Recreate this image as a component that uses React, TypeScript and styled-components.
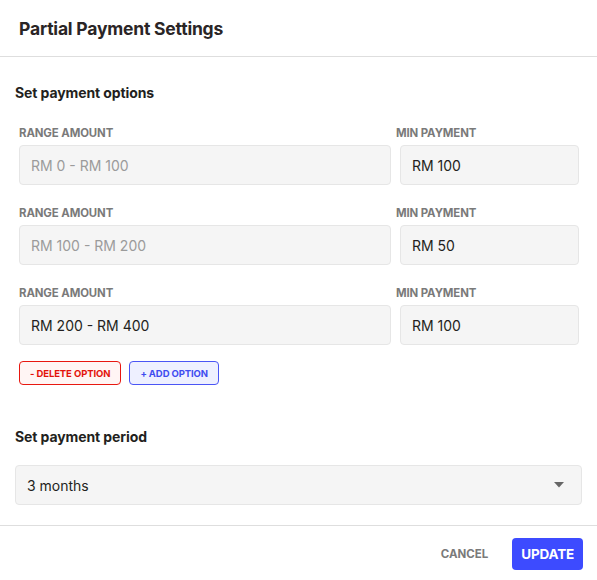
import * as React from "react";
import styled, { createGlobalStyle } from "styled-components";

const GlobalStyle = createGlobalStyle`
  html, body {
    margin: 0;
    padding: 0;
    background: #ffffff;
  }
  body {
    font-family: Inter, "Noto Sans", sans-serif;
    color: #231f20;
  }
`;

const options = [
  { range: "RM 0 - RM 100", min: "RM 100", locked: true },
  { range: "RM 100 - RM 200", min: "RM 50", locked: true },
  { range: "RM 200 - RM 400", min: "RM 100", locked: false }
];

export default function App() {
  return (
    <React.Fragment>
      <GlobalStyle />
      <Dialog>
        <Header>
          <Title>Partial Payment Settings</Title>
        </Header>

        <Body>
          <SectionTitle>Set payment options</SectionTitle>

          {options.map((option, i) => (
            <OptionRow key={i}>
              <RangeCell>
                <Label>Range Amount</Label>
                <Field $muted={option.locked}>{option.range}</Field>
              </RangeCell>
              <MinCell>
                <Label>Min Payment</Label>
                <MinField>{option.min}</MinField>
              </MinCell>
            </OptionRow>
          ))}

          <OptionActions>
            <SmallButton $tone="red">- Delete Option</SmallButton>
            <SmallButton $tone="blue">+ Add Option</SmallButton>
          </OptionActions>

          <PeriodTitle>Set payment period</PeriodTitle>
          <Select>
            <span>3 months</span>
            <svg width="10" height="6" viewBox="0 0 10 6">
              <path d="M0 0 L10 0 L5 5.5 Z" fill="#666" />
            </svg>
          </Select>
        </Body>

        <Footer>
          <CancelButton>Cancel</CancelButton>
          <UpdateButton>Update</UpdateButton>
        </Footer>
      </Dialog>
    </React.Fragment>
  );
}

const Dialog = styled.div`
  width: 597px;
  height: 580px;
  display: flex;
  flex-direction: column;
  background: #fff;
  box-sizing: border-box;
`;

const Header = styled.div`
  height: 56px;
  display: flex;
  align-items: center;
  padding-left: 19px;
  border-bottom: 1px solid #dedede;
`;

const Title = styled.h1`
  margin: 0;
  font-size: 17.5px;
  font-weight: 700;
  letter-spacing: -0.2px;
  color: #2a2526;
`;

const Body = styled.div`
  padding: 26px 15px 20px;
  border-bottom: 1px solid #dedede;
`;

const SectionTitle = styled.h2`
  margin: 0 0 24px;
  font-size: 14px;
  line-height: 20px;
  font-weight: 700;
  letter-spacing: -0.1px;
  color: #231f20;
`;

const PeriodTitle = styled(SectionTitle)`
  margin: 42px 0 18px;
`;

const OptionRow = styled.div`
  display: grid;
  grid-template-columns: 376px 1fr;
  column-gap: 5px;
  margin-bottom: 22px;

  &:nth-of-type(3) {
    margin-bottom: 16px;
  }
`;

const RangeCell = styled.div`
  display: flex;
  flex-direction: column;
  padding-left: 4px;
`;

const MinCell = styled.div`
  display: flex;
  flex-direction: column;
`;

const Label = styled.div`
  font-size: 11.4px;
  line-height: 13px;
  font-weight: 700;
  text-transform: uppercase;
  letter-spacing: -0.1px;
  color: #7a7a7a;
  margin-bottom: 5px;
`;

const Field = styled.div<{ $muted?: boolean }>`
  height: 40px;
  box-sizing: border-box;
  display: flex;
  align-items: center;
  padding-left: 11px;
  background: #f5f5f5;
  border: 1px solid #e6e6e6;
  border-radius: 4px;
  font-size: 14px;
  color: ${(p) => (p.$muted ? "#9b9b9b" : "#231f20")};
`;

const MinField = styled(Field)`
  margin: 0 3px 0 4px;
`;

const OptionActions = styled.div`
  display: flex;
  gap: 8px;
  padding-left: 4px;
`;

const SmallButton = styled.button<{ $tone: "red" | "blue" }>`
  height: 24px;
  padding: 0 10px;
  border-radius: 4px;
  font-family: inherit;
  font-size: 9.5px;
  font-weight: 700;
  text-transform: uppercase;
  letter-spacing: -0.1px;
  cursor: pointer;
  border: 1px solid ${(p) => (p.$tone === "red" ? "#e8170f" : "#4a55f5")};
  color: ${(p) => (p.$tone === "red" ? "#e3120b" : "#3f4cf0")};
  background: ${(p) => (p.$tone === "red" ? "#fff5f4" : "#eef0ff")};
`;

const Select = styled.div`
  height: 40px;
  box-sizing: border-box;
  display: flex;
  align-items: center;
  justify-content: space-between;
  padding: 0 17px 0 11px;
  background: #f5f5f5;
  border: 1px solid #e6e6e6;
  border-radius: 4px;
  font-size: 14px;
  color: #231f20;
`;

const Footer = styled.div`
  display: flex;
  justify-content: flex-end;
  align-items: flex-start;
  gap: 24px;
  padding: 12px 14px 0;
`;

const CancelButton = styled.button`
  height: 32px;
  padding: 0;
  border: none;
  background: none;
  font-family: inherit;
  font-size: 11.5px;
  font-weight: 700;
  text-transform: uppercase;
  color: #7a7a7a;
  cursor: pointer;
`;

const UpdateButton = styled.button`
  height: 32px;
  padding: 0 9px;
  border: none;
  border-radius: 4px;
  background: #3d4bff;
  color: #fff;
  font-family: inherit;
  font-size: 13.5px;
  font-weight: 700;
  text-transform: uppercase;
  letter-spacing: -0.2px;
  cursor: pointer;
`;
